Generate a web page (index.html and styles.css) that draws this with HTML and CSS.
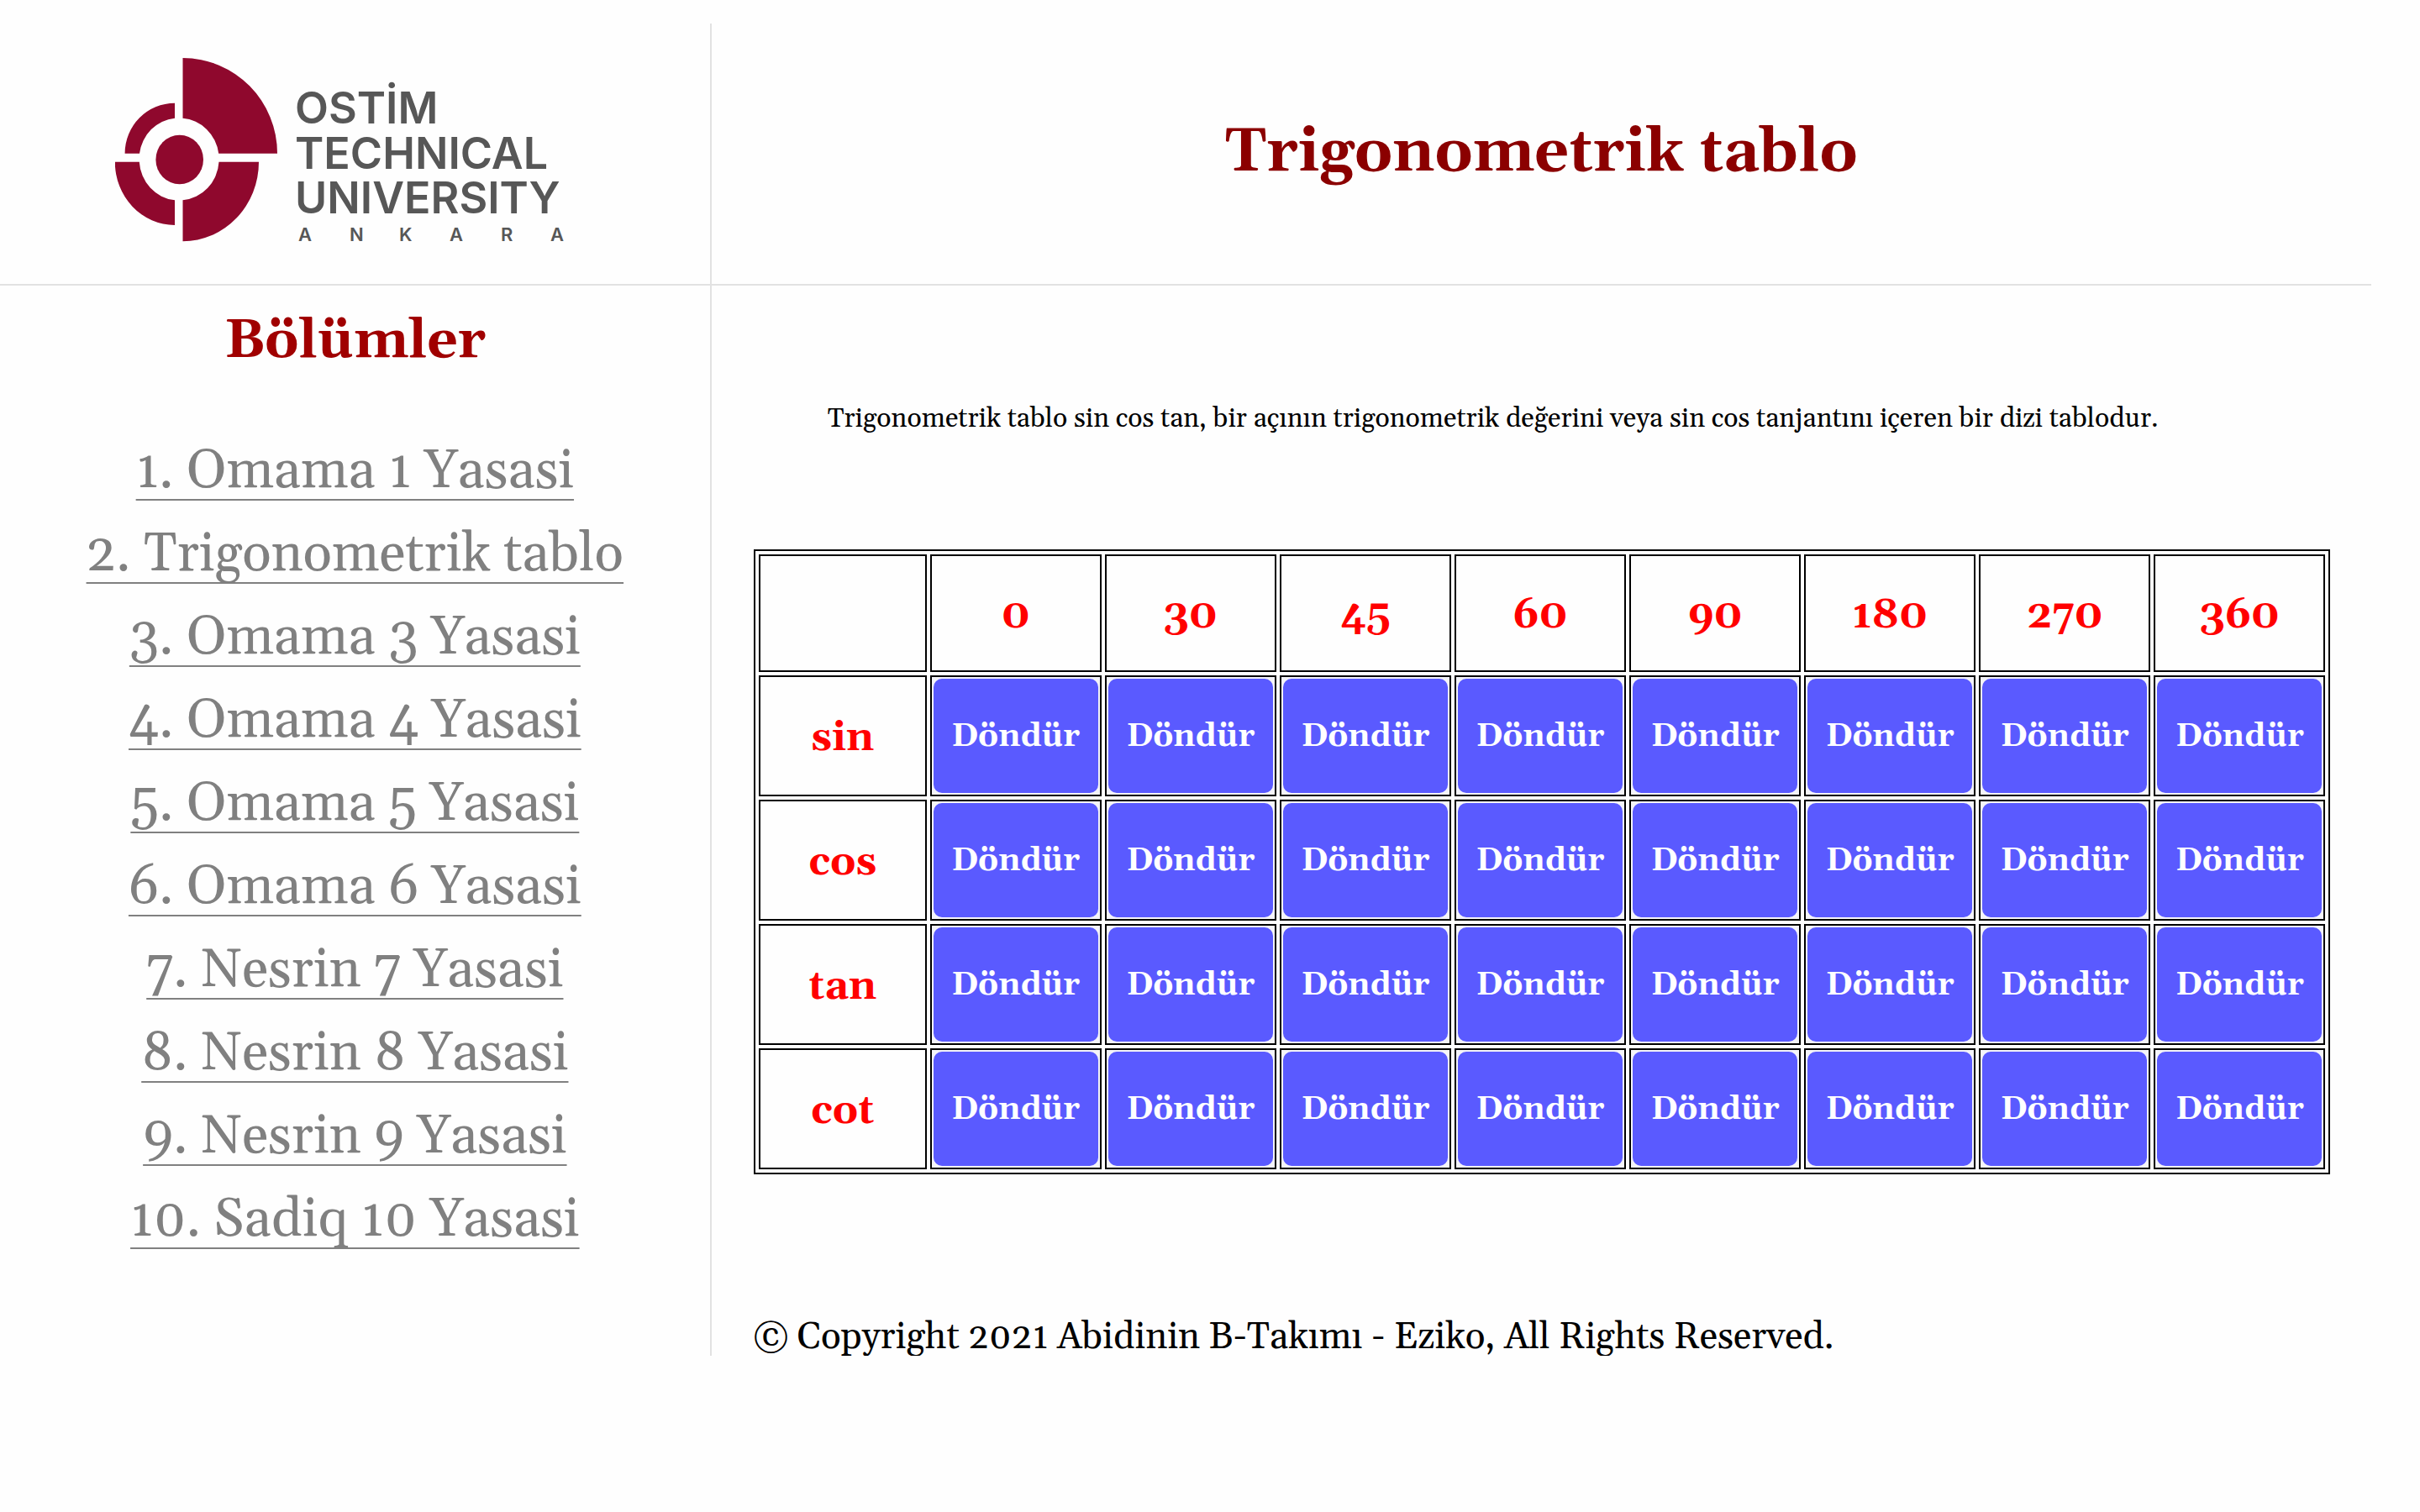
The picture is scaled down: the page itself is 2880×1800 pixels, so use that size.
FILE: index.html
```html
<!DOCTYPE html>
<html lang="tr">
<head>
<meta charset="utf-8">
<title>Trigonometrik tablo</title>
<link rel="stylesheet" href="styles.css">
</head>
<body>
<div class="page">
  <div class="brand">
    <svg class="logo" viewBox="137 69 570 228" role="img" aria-label="Ostim Technical University Ankara">
      <g class="logo-mark">
        <path d="M217.500 69A112.500 113.700 0 0 1 330 182.700H260.200A47 48.800 0 0 0 217.500 140.700Z"/>
        <path d="M260.500 192.700H308A90.500 94.600 0 0 1 217.500 287.300V238.300A47 48.800 0 0 0 260.500 192.700Z"/>
        <path d="M208 122.700V140.700A47 48.800 0 0 0 166 182.700H148.600A59.400 60 0 0 1 208 122.700Z"/>
        <path d="M136.800 192.700H165.800A47 48.800 0 0 0 208 238.300V268A71.200 75.300 0 0 1 136.800 192.700Z"/>
        <ellipse cx="213.700" cy="190" rx="28.300" ry="29.200"/>
      </g>
      <g class="logo-name">
        <text x="351" y="147">OSTİM</text>
        <text x="351" y="201">TECHNICAL</text>
        <text x="351" y="254">UNIVERSITY</text>
        <text class="logo-city" x="355 416 475 535 596 655" y="287">ANKARA</text>
      </g>
    </svg>
  </div>
  <header class="heading">
    <h1>Trigonometrik tablo</h1>
  </header>
  <nav class="sidebar">
    <h2>Bölümler</h2>
    <ul>
      <li><a href="#">1. Omama 1 Yasasi</a></li>
      <li><a href="#">2. Trigonometrik tablo</a></li>
      <li><a href="#">3. Omama 3 Yasasi</a></li>
      <li><a href="#">4. Omama 4 Yasasi</a></li>
      <li><a href="#">5. Omama 5 Yasasi</a></li>
      <li><a href="#">6. Omama 6 Yasasi</a></li>
      <li><a href="#">7. Nesrin 7 Yasasi</a></li>
      <li><a href="#">8. Nesrin 8 Yasasi</a></li>
      <li><a href="#">9. Nesrin 9 Yasasi</a></li>
      <li><a href="#">10. Sadiq 10 Yasasi</a></li>
    </ul>
  </nav>
  <main class="content">
    <p class="intro">Trigonometrik tablo sin cos tan, bir açının trigonometrik değerini veya sin cos tanjantını içeren bir dizi tablodur.</p>
    <table>
      <colgroup><col class="label-col"><col span="8"></colgroup>
      <thead>
        <tr><th></th><th scope="col">0</th><th scope="col">30</th><th scope="col">45</th><th scope="col">60</th><th scope="col">90</th><th scope="col">180</th><th scope="col">270</th><th scope="col">360</th></tr>
      </thead>
      <tbody>
        <tr><th scope="row">sin</th><td><button type="button">Döndür</button></td><td><button type="button">Döndür</button></td><td><button type="button">Döndür</button></td><td><button type="button">Döndür</button></td><td><button type="button">Döndür</button></td><td><button type="button">Döndür</button></td><td><button type="button">Döndür</button></td><td><button type="button">Döndür</button></td></tr>
        <tr><th scope="row">cos</th><td><button type="button">Döndür</button></td><td><button type="button">Döndür</button></td><td><button type="button">Döndür</button></td><td><button type="button">Döndür</button></td><td><button type="button">Döndür</button></td><td><button type="button">Döndür</button></td><td><button type="button">Döndür</button></td><td><button type="button">Döndür</button></td></tr>
        <tr><th scope="row">tan</th><td><button type="button">Döndür</button></td><td><button type="button">Döndür</button></td><td><button type="button">Döndür</button></td><td><button type="button">Döndür</button></td><td><button type="button">Döndür</button></td><td><button type="button">Döndür</button></td><td><button type="button">Döndür</button></td><td><button type="button">Döndür</button></td></tr>
        <tr><th scope="row">cot</th><td><button type="button">Döndür</button></td><td><button type="button">Döndür</button></td><td><button type="button">Döndür</button></td><td><button type="button">Döndür</button></td><td><button type="button">Döndür</button></td><td><button type="button">Döndür</button></td><td><button type="button">Döndür</button></td><td><button type="button">Döndür</button></td></tr>
      </tbody>
    </table>
    <footer>© Copyright 2021 Abidinin B-Takımı - Eziko, All Rights Reserved.</footer>
  </main>
</div>
</body>
</html>
```
FILE: styles.css
```css
* {
  box-sizing: border-box;
}

body {
  margin: 0;
  background: #fefefe;
  color: #000;
  font-family: Georgia, Gelasio, "Liberation Serif", serif;
}

h1, h2, p, ul {
  margin: 0;
  padding: 0;
}

.page {
  display: grid;
  grid-template-columns: 30% 70%;
  width: 98%;
  padding-top: 28px;
}

/* Top row */
.brand {
  padding: 41px 0;
  border-right: 2px solid #e2e2e2;
  border-bottom: 2px solid #e2e2e2;
  text-align: center;
}

.logo {
  display: block;
  width: 570px;
  max-width: 100%;
  margin: 0 auto;
}

.logo-mark {
  fill: #8f082d;
}

.logo-name {
  fill: #575757;
  font: 600 52px Inter, sans-serif;
}

.logo-city {
  font-size: 22px;
}

.heading {
  padding-top: 112px;
  border-bottom: 2px solid #e2e2e2;
  text-align: center;
}

h1 {
  color: #8b0000;
  font-size: 72px;
  line-height: 84px;
}

/* Section list */
.sidebar {
  padding-top: 31px;
  border-right: 2px solid #e2e2e2;
  text-align: center;
}

h2 {
  margin-bottom: 69px;
  color: #a00000;
  font-size: 64px;
  line-height: 72px;
}

ul {
  list-style: none;
  font-size: 64px;
  line-height: 99px;
}

.sidebar a {
  color: #808080;
  text-decoration: underline 2px;
  text-decoration-skip-ink: none;
  text-underline-offset: 14px;
}

/* Main column */
.content {
  padding: 141px 49px 0 50px;
}

.intro {
  margin: 0 88px 137px;
  font-size: 32px;
  line-height: 36px;
}

table {
  width: 100%;
  table-layout: fixed;
  border: 2px solid #000;
  border-spacing: 4px;
}

.label-col {
  width: 200px;
}

th, td {
  padding: 2px;
  border: 2px solid #000;
}

th {
  height: 140px;
  padding-top: 8px;
  color: #f00;
  font-size: 48px;
  line-height: 54px;
}

td {
  background: #f4f4f9;
}

button {
  display: block;
  width: 100%;
  height: 136px;
  padding: 2px 0 0;
  border: 0;
  border-radius: 10px;
  background: #5a5aff;
  color: #fff;
  font: bold 38px/44px Georgia, Gelasio, "Liberation Serif", serif;
}

footer {
  margin-top: 172px;
  font-size: 44px;
  line-height: 44px;
}
```
